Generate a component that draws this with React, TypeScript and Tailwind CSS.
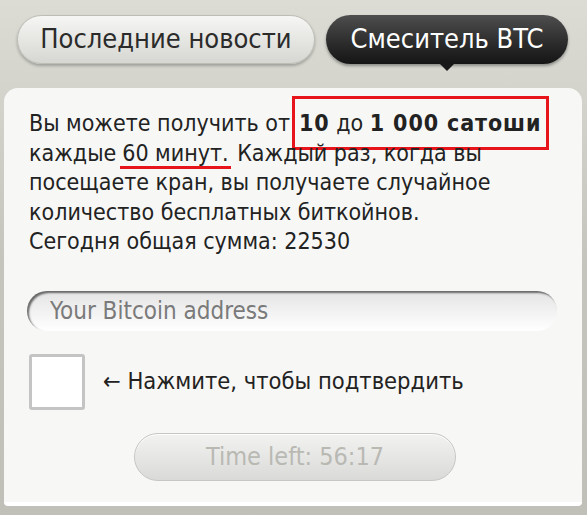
export default function App() {
  const font = { fontFamily: '"DejaVu Sans Condensed", "DejaVu Sans", sans-serif' }
  return (
    <div
      style={font}
      className="w-[587px] h-[515px] overflow-hidden bg-gradient-to-b from-[#dcdcd5] via-[#c5c5bd] to-[#c0c0b8] pt-[15px]"
    >
      {/* Tabs */}
      <div className="flex items-center pl-[17px] gap-[11px]">
        <div className="w-[298px] h-[49px] rounded-full bg-gradient-to-b from-[#f6f6f4] to-[#d6d6d2] border border-[#bdbdb6] shadow-[0_2px_3px_rgba(0,0,0,0.25)] flex items-center justify-center text-[27px] text-[#2b2b2b]">
          Последние новости
        </div>
        <div className="relative w-[242px] h-[49px] rounded-full bg-gradient-to-b from-[#4e4e4e] to-[#151515] shadow-[0_2px_3px_rgba(0,0,0,0.35)] flex items-center justify-center text-[27px] text-white">
          Смеситель BTC
          <span className="absolute left-1/2 -translate-x-1/2 top-[48px] w-0 h-0 border-l-[8px] border-r-[8px] border-t-[8px] border-l-transparent border-r-transparent border-t-[#171717]" />
        </div>
      </div>

      {/* Panel */}
      <div className="mt-[24px] ml-[4px] w-[578px] h-[418px] rounded-t-[14px] rounded-b-[4px] bg-[#f7f7f5] border-b-[4px] border-white px-[25px] pt-[21px]">
        <p className="text-[23px] leading-[29.5px] text-[#222]">
          Вы можете получить от
          <span className="ml-[2px] border-[3px] border-[#e8141c] pl-[4px] pr-[5px] py-[11px]">
            <b className="tracking-[0.9px]">10</b> до <b className="tracking-[0.9px]">1 000 сатоши</b>
          </span>{' '}
          каждые<span className="ml-[4px] border-b-[3px] border-[#e8141c] px-[2px]">60 минут.</span> Каждый раз, когда вы
          посещаете кран, вы получаете случайное количество бесплатных биткойнов.
          <br />
          Сегодня общая сумма: 22530
        </p>

        <input
          type="text"
          placeholder="Your Bitcoin address"
          className="mt-[34px] block w-[530px] h-[40px] -ml-[2px] rounded-full bg-gradient-to-b from-[#e4e4e4] to-[#ffffff] shadow-[inset_2px_2px_2px_rgba(0,0,0,0.55)] pl-[23px] text-[24px] text-[#333] placeholder:text-[#7a7a7a] outline-none"
        />

        <div className="mt-[23px] flex items-center gap-[18px]">
          <div className="w-[56px] h-[56px] bg-white border-[3px] border-[#c4c4c4] rounded-[3px]" />
          <span className="text-[23.5px] text-[#222]">← Нажмите, чтобы подтвердить</span>
        </div>

        <button className="mt-[23px] ml-[105px] w-[322px] h-[48px] rounded-full border border-[#c6c6c2] bg-gradient-to-b from-[#f2f2f0] to-[#dadad8] shadow-[inset_0_1px_0_rgba(255,255,255,0.9)] text-[25px] text-[#b9b9b4]">
          Time left: 56:17
        </button>
      </div>
    </div>
  )
}
